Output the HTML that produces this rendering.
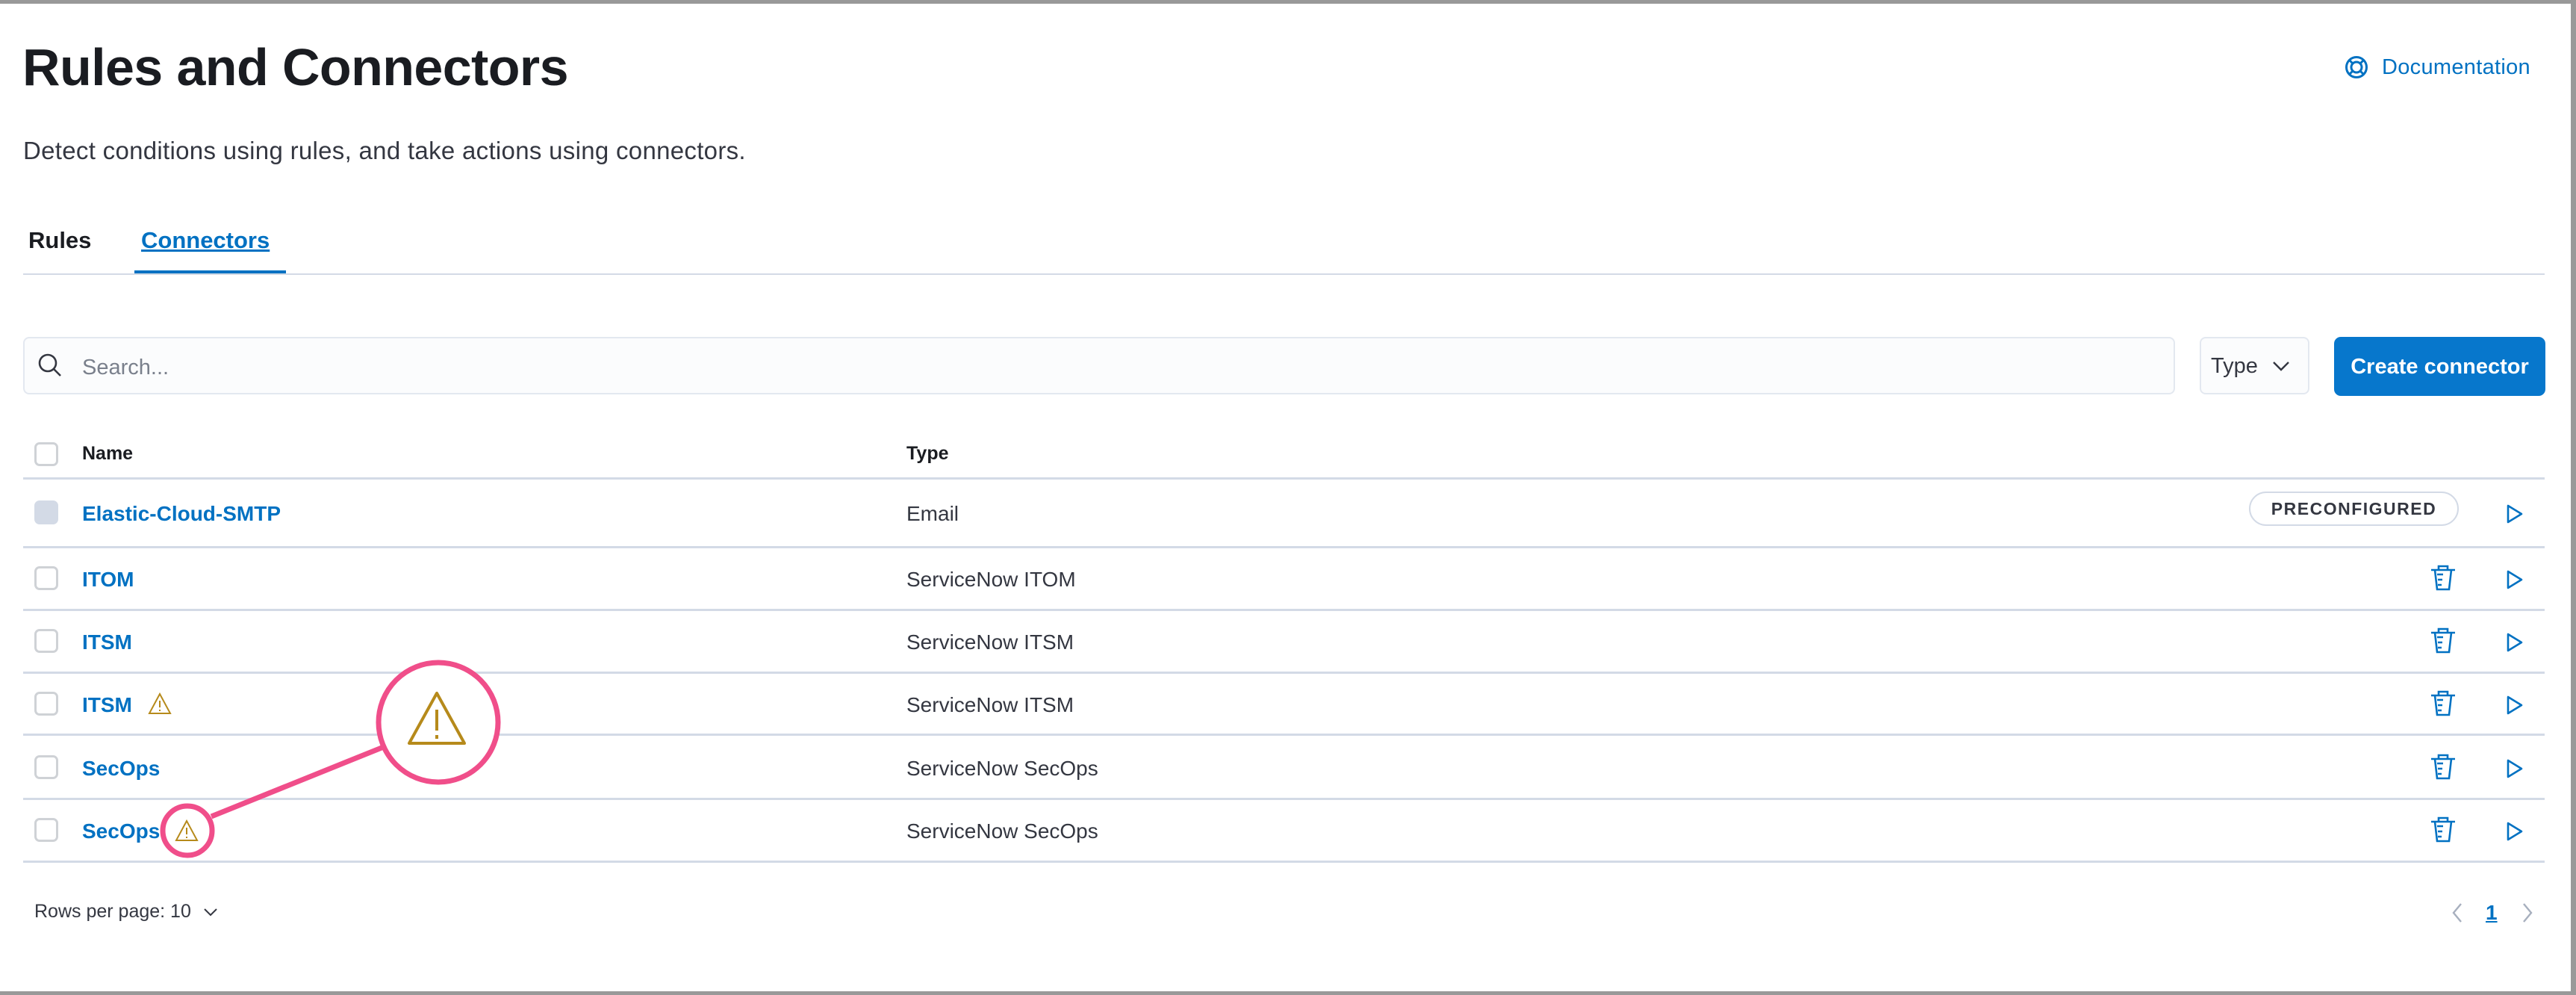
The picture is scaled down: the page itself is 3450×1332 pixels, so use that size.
<!DOCTYPE html>
<html><head><meta charset="utf-8"><style>
*{margin:0;padding:0;box-sizing:border-box}
body{width:3450px;height:1332px;background:#fff;font-family:"Liberation Sans",sans-serif;position:relative;overflow:hidden;color:#343741}
.a{position:absolute;white-space:nowrap}
.line{position:absolute;height:3px;background:#d3dae6;left:31px;width:3377px}
.cb{position:absolute;left:46px;width:32px;height:32px;border:3px solid #cfd2d6;border-radius:7px;background:#fff}
.nm{position:absolute;left:110px;font-size:28px;font-weight:bold;color:#0071c2}
.ty{position:absolute;left:1214px;font-size:28px;color:#343741}
.tr{position:absolute;left:3254px}
.pl{position:absolute;left:3356px}
</style></head><body>
<div class="a" style="left:0;top:0;width:3450px;height:5px;background:#999"></div>
<div class="a" style="left:3443px;top:0;width:7px;height:1332px;background:#999"></div>
<div class="a" style="left:0;top:1327px;width:3450px;height:5px;background:#999"></div>

<div class="a" style="left:30px;top:50px;font-size:70px;font-weight:bold;color:#1a1c21;letter-spacing:-0.6px">Rules and Connectors</div>
<svg class="a" style="left:3140px;top:74px" width="32" height="32" viewBox="0 0 32 32" fill="none" stroke="#0071c2" stroke-width="3"><circle cx="16" cy="16" r="13.5"/><circle cx="16" cy="16" r="7"/><path d="M7 7l4 4M25 7l-4 4M7 25l4-4M25 25l-4-4"/></svg>
<div class="a" style="left:3190px;top:74px;font-size:29px;color:#0071c2;letter-spacing:0.3px">Documentation</div>

<div class="a" style="left:31px;top:183px;font-size:33px;color:#343741;letter-spacing:0.3px">Detect conditions using rules, and take actions using connectors.</div>

<div class="a" style="left:38px;top:304px;font-size:31px;font-weight:bold;color:#1a1c21">Rules</div>
<div class="a" style="left:189px;top:304px;font-size:31px;font-weight:bold;color:#0071c2;text-decoration:underline">Connectors</div>
<div class="a" style="left:180px;top:362px;width:203px;height:4px;background:#0071c2"></div>
<div class="a" style="left:31px;top:366px;width:3377px;height:2px;background:#d3dae6"></div>

<div class="a" style="left:31px;top:451px;width:2882px;height:77px;background:#fbfcfd;border:2px solid #e3e8f0;border-radius:8px"></div>
<svg class="a" style="left:50px;top:472px" width="34" height="34" viewBox="0 0 34 34" fill="none" stroke="#343741" stroke-width="2.6"><circle cx="14" cy="14" r="11"/><path d="M22 22l9 9"/></svg>
<div class="a" style="left:110px;top:476px;font-size:29px;color:#7a808c">Search...</div>

<div class="a" style="left:2946px;top:451px;width:147px;height:77px;background:#fbfcfd;border:2px solid #e3e8f0;border-radius:8px"></div>
<div class="a" style="left:2961px;top:474px;font-size:29px;color:#343741">Type</div>
<svg class="a" style="left:3043px;top:482px" width="24" height="16" viewBox="0 0 24 16" fill="none" stroke="#343741" stroke-width="2.4"><path d="M2 3l10 10 10-10"/></svg>

<div class="a" style="left:3126px;top:451px;width:283px;height:79px;background:#0777cc;border-radius:9px"></div>
<div class="a" style="left:3126px;top:475px;width:283px;text-align:center;font-size:29px;font-weight:bold;color:#fff">Create connector</div>

<div class="cb" style="top:592px"></div>
<div class="a" style="left:110px;top:593px;font-size:25px;font-weight:bold;color:#1a1c21">Name</div>
<div class="a" style="left:1214px;top:593px;font-size:25px;font-weight:bold;color:#1a1c21">Type</div>
<div class="line" style="top:639px"></div>

<div class="cb" style="top:670px;background:#d3dae6;border-color:#d3dae6"></div>
<div class="nm" style="top:672px">Elastic-Cloud-SMTP</div>
<div class="ty" style="top:672px">Email</div>
<div class="a" style="left:3012px;top:658px;width:281px;height:46px;border:2px solid #d3dae6;border-radius:23px;text-align:center;font-size:23px;font-weight:bold;color:#343741;letter-spacing:1.5px;line-height:42px">PRECONFIGURED</div>
<svg class="pl" style="top:674px" width="24" height="28" viewBox="0 0 24 28" fill="none" stroke="#0071c2" stroke-width="2.6" stroke-linejoin="round"><path d="M3 3v22l18-11z"/></svg>
<div class="line" style="top:731px"></div>

<div class="cb" style="top:758px"></div><div class="nm" style="top:760px">ITOM</div><div class="ty" style="top:760px">ServiceNow ITOM</div>
<div class="line" style="top:815px"></div>
<div class="cb" style="top:842px"></div><div class="nm" style="top:844px">ITSM</div><div class="ty" style="top:844px">ServiceNow ITSM</div>
<div class="line" style="top:899px"></div>
<div class="cb" style="top:926px"></div><div class="nm" style="top:928px">ITSM</div><div class="ty" style="top:928px">ServiceNow ITSM</div>
<div class="line" style="top:982px"></div>
<div class="cb" style="top:1011px"></div><div class="nm" style="top:1013px">SecOps</div><div class="ty" style="top:1013px">ServiceNow SecOps</div>
<div class="line" style="top:1068px"></div>
<div class="cb" style="top:1095px"></div><div class="nm" style="top:1097px">SecOps</div><div class="ty" style="top:1097px">ServiceNow SecOps</div>
<div class="line" style="top:1152px"></div>

<svg class="a" style="left:198px;top:927px" width="32" height="30" viewBox="0 0 32 30" fill="none" stroke="#b68a1b" stroke-width="2"><path d="M16 2L2 28h28z"/><path d="M16 11v9M16 23v2"/></svg>
<svg class="a" style="left:234px;top:1097px" width="32" height="30" viewBox="0 0 32 30" fill="none" stroke="#b68a1b" stroke-width="2"><path d="M16 2L2 28h28z"/><path d="M16 11v9M16 23v2"/></svg>

<svg width="0" height="0" style="position:absolute"><defs>
<symbol id="tr" viewBox="0 0 36 36"><g fill="none" stroke="#0071c2" stroke-width="2.6"><path d="M2 7h32M12 7V2h12v5M7 7l3 26h16l3-26M10 13h8M11 20h6M11 27h5"/></g></symbol>
<symbol id="pl" viewBox="0 0 24 28"><path d="M3 3v22l18-11z" fill="none" stroke="#0071c2" stroke-width="2.6" stroke-linejoin="round"/></symbol>
</defs></svg>
<svg class="tr" style="top:756px" width="36" height="36"><use href="#tr"/></svg><svg class="pl" style="top:762px" width="24" height="28"><use href="#pl"/></svg>
<svg class="tr" style="top:840px" width="36" height="36"><use href="#tr"/></svg><svg class="pl" style="top:846px" width="24" height="28"><use href="#pl"/></svg>
<svg class="tr" style="top:924px" width="36" height="36"><use href="#tr"/></svg><svg class="pl" style="top:930px" width="24" height="28"><use href="#pl"/></svg>
<svg class="tr" style="top:1009px" width="36" height="36"><use href="#tr"/></svg><svg class="pl" style="top:1015px" width="24" height="28"><use href="#pl"/></svg>
<svg class="tr" style="top:1093px" width="36" height="36"><use href="#tr"/></svg><svg class="pl" style="top:1099px" width="24" height="28"><use href="#pl"/></svg>

<svg class="a" style="left:0;top:0" width="3450" height="1332" viewBox="0 0 3450 1332" fill="none">
<line x1="283" y1="1093" x2="521" y2="997" stroke="#f04e8a" stroke-width="7"/>
<circle cx="251" cy="1112" r="33" fill="none" stroke="#f04e8a" stroke-width="7"/>
<circle cx="587" cy="967" r="80" fill="#fff" stroke="#f04e8a" stroke-width="7"/>
<path d="M585 928L548 995h74z" stroke="#b68a1b" stroke-width="4" stroke-linejoin="round"/>
<path d="M585 950v28M585 984v5" stroke="#b68a1b" stroke-width="4"/>
</svg>

<div class="a" style="left:46px;top:1206px;font-size:25px;color:#343741">Rows per page: 10</div>
<svg class="a" style="left:272px;top:1214px" width="20" height="14" viewBox="0 0 20 14" fill="none" stroke="#343741" stroke-width="2"><path d="M2 3l8 8 8-8"/></svg>
<svg class="a" style="left:3283px;top:1208px" width="16" height="28" viewBox="0 0 16 28" fill="none" stroke="#a7afbe" stroke-width="2.4"><path d="M13 2L3 14l10 12"/></svg>
<div class="a" style="left:3329px;top:1206px;font-size:28px;font-weight:bold;color:#0071c2;text-decoration:underline">1</div>
<svg class="a" style="left:3377px;top:1208px" width="16" height="28" viewBox="0 0 16 28" fill="none" stroke="#a7afbe" stroke-width="2.4"><path d="M3 2l10 12L3 26"/></svg>
</body></html>
